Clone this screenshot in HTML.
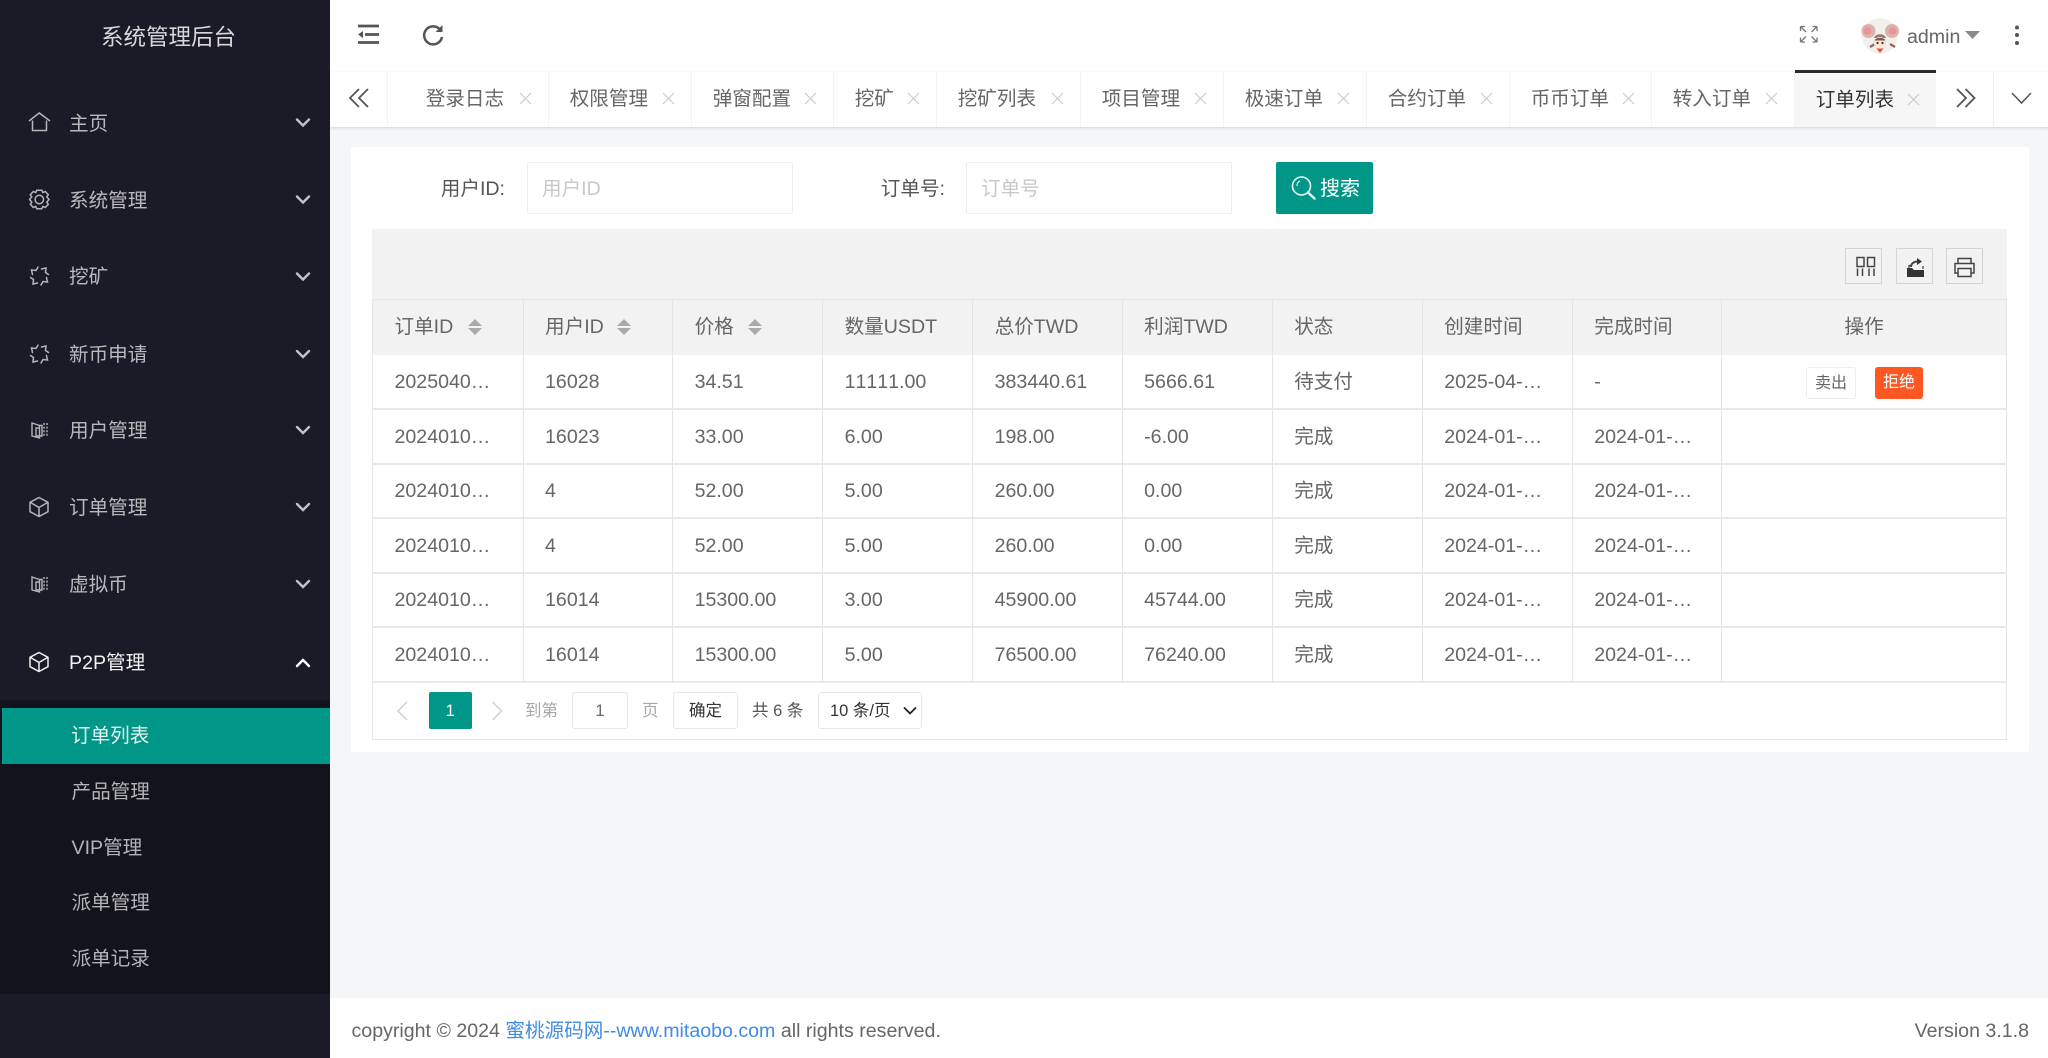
<!DOCTYPE html>
<html lang="zh-CN"><head><meta charset="utf-8"><title>订单列表</title>
<style>
*{box-sizing:border-box}
html,body{margin:0;padding:0;width:2048px;height:1058px;overflow:hidden;background:#f5f6f8}
body{position:relative;font-family:"Liberation Sans","Noto Sans CJK SC",sans-serif;font-size:19.6px;color:#666;filter:blur(.35px)}
.a{position:absolute}
.t{position:absolute;white-space:nowrap;line-height:28px;height:28px}
svg{position:absolute;overflow:visible;fill:none}
#side{left:0;top:0;width:330px;height:1058px;background:#1a1b26}
.m{color:#b9b9bd;left:69px;font-size:19.6px}
.s{color:#b4b4b8;left:71.5px;font-size:19.6px}
.tab{position:absolute;top:72px;height:55px;border-right:1px solid #f3f3f3;background:#fff;font-size:19.6px;line-height:54px;padding-left:20.7px;color:#666;white-space:nowrap}
.tab svg{top:21px;right:17px;width:11px;height:11px;stroke:#c8c8c8;stroke-width:1.1}
table{position:absolute;left:372px;top:299px;width:1635px;border-collapse:separate;border-spacing:0;table-layout:fixed;font-size:19.6px;color:#666;line-height:28px;font-kerning:none}
th{font-weight:400;text-align:left;background:#f2f2f2;padding:0 0 2px 21.5px;height:56px;border-right:1px solid #e4e4e4;border-top:1px solid #e6e6e6}
td{padding:0 0 0 21.5px;border-right:1px solid #e4e4e4;border-bottom:2px solid #e8e8e8;background:#fff;white-space:nowrap;overflow:hidden}
tr td:first-child,tr th:first-child{border-left:1px solid #e6e6e6}
tr td:nth-child(2),tr th:nth-child(2){padding-left:21px}
.sort{position:absolute;width:14px;height:16px;top:319px}
.sort:before{content:"";position:absolute;left:0;top:0;border:7px solid transparent;border-top:0;border-bottom:7px solid #a9a9a9}
.sort:after{content:"";position:absolute;left:0;top:9px;border:7px solid transparent;border-bottom:0;border-top:7px solid #a9a9a9}
.tb{position:absolute;top:248px;width:37px;height:36px;border:1px solid #d5d5d5;background:#f2f2f2}
.box{position:absolute;border:1px solid #e8e8e8;background:#fff;border-radius:3px;text-align:center}
</style></head><body>
<svg width="0" height="0" style="position:absolute"><defs>
<g id="i-burst" stroke-width="1.5" stroke-linecap="round"><path d="M-1.500-8.800L-3.500-5.500L-8-6L-7-1.500M-9 1.500L-6 3.500L-6.500 8L-2 7M1.500 9L3.500 5.500L8 6L7 1.500M9-1.500L6-3.500L6.500-8L2-7"/></g>
<g id="i-book" stroke-width="1.4"><path d="M-7.500-7L0-4.500V8L-7.500 6ZM0-4.500H2.500V6H-3.500V-2H0" /><path d="M4.500-7V7M7.500-7V7" stroke-dasharray="2 1.600"/></g>
<g id="i-cube" stroke-width="1.5" stroke-linejoin="round"><path d="M0-9.500L9-4.700V4.700L0 9.500L-9 4.700V-4.700ZM-8.500-4.500L0 0.500L8.500-4.500M0 .5V9"/></g>
<path id="i-x" d="M0 0L11 11M11 0L0 11"/>
</defs></svg>

<!-- sidebar -->
<div class="a" id="side"></div>
<div class="t" style="left:101px;top:24px;color:#d8d8da;font-size:22.5px;">系统管理后台</div>
<div class="a" style="left:0;top:700px;width:330px;height:294px;background:#12131b"></div>
<div class="a" style="left:2px;top:708px;width:328px;height:56px;background:#009688"></div>

<svg style="left:0;top:0" width="330" height="700" stroke="#b5b5b9">
<path d="M29 121L39.300 113L50 121M32.500 120.500V130.500H46.500V120.500" stroke-width="1.5"/>
<g transform="translate(39.300,199.500)" stroke-width="1.500"><circle r="4.200"/><path d="M-2.500-9.300H2.500L3.500-7L6-8L9-4.800L7.500-2.700L9.700 0L7.500 2.700L9 4.800L6 8L3.500 7L2.500 9.300H-2.500L-3.500 7L-6 8L-9 4.800L-7.500 2.700L-9.700 0L-7.500-2.700L-9-4.800L-6-8L-3.500-7Z"/></g>
<use href="#i-burst" transform="translate(39.500,276)"/>
<use href="#i-burst" transform="translate(39.500,354)"/>
<use href="#i-book" transform="translate(39.500,430)"/>
<use href="#i-cube" transform="translate(39,507)"/>
<use href="#i-book" transform="translate(39.500,584)"/>
<use href="#i-cube" transform="translate(39,662)" stroke="#f2f2f2" stroke-width="1.800"/>
<g stroke-width="2.400" stroke="#c2c2c5" stroke-linecap="round">
<path d="M297 119.500L303 125.500L309 119.500M297 196.500L303 202.500L309 196.500M297 273.500L303 279.500L309 273.500M297 351L303 357L309 351M297 427L303 433L309 427M297 504L303 510L309 504M297 581L303 587L309 581"/>
<path d="M297 666L303 660L309 666" stroke="#fff"/>
</g>
</svg>
<div class="t m" style="top:110px">主页</div>
<div class="t m" style="top:187px">系统管理</div>
<div class="t m" style="top:263px">挖矿</div>
<div class="t m" style="top:341px">新币申请</div>
<div class="t m" style="top:417px">用户管理</div>
<div class="t m" style="top:494px">订单管理</div>
<div class="t m" style="top:571px">虚拟币</div>
<div class="t m" style="top:649px;color:#f2f2f2">P2P管理</div>
<div class="t s" style="top:722px;color:#e8f4f2;left:71px">订单列表</div>
<div class="t s" style="top:778px">产品管理</div>
<div class="t s" style="top:834px">VIP管理</div>
<div class="t s" style="top:889px">派单管理</div>
<div class="t s" style="top:945px">派单记录</div>

<!-- header -->
<div class="a" style="left:330px;top:0;width:1718px;height:72px;background:#fff"></div>
<svg style="left:0;top:0" width="2048" height="72">
<path d="M358 26H379M365 34.500H379M358 42.500H379" stroke="#555" stroke-width="2.800"/>
<path d="M363 31V38L358 34.500Z" fill="#555"/>
<path d="M439.500 29A9 9 0 1 0 442 37" stroke="#555" stroke-width="2.500"/>
<path d="M442.500 25V32H435.500Z" fill="#555"/>
<g stroke="#777" stroke-width="1.300"><path d="M1800.500 26.500L1806 32M1800.500 26.500H1805M1800.500 26.500V31M1817 26.500L1811.500 32M1817 26.500H1812.500M1817 26.500V31M1800.500 42L1806 36.500M1800.500 42H1805M1800.500 42V37.500M1817 42L1811.500 36.500M1817 42H1812.500M1817 42V37.500"/></g>
<circle cx="1880" cy="36" r="18" fill="#f3efec"/>
<circle cx="1868.500" cy="31" r="7" fill="#d6b5ad"/><circle cx="1867.500" cy="31" r="3.800" fill="#ef8f96"/>
<circle cx="1892" cy="31" r="7" fill="#d6b5ad"/><circle cx="1892.500" cy="31" r="3.800" fill="#ef8f96"/>
<path d="M1870 47L1875 44M1890 44L1895 47" stroke="#8a6a5e" stroke-width="2.200"/>
<path d="M1874 38C1875 33 1885 33 1886 38Z" fill="#9a7c70"/>
<circle cx="1880" cy="43" r="6" fill="#fbe3d6"/>
<path d="M1874.500 40.500C1876 37 1884 37 1885.500 40.500Z" fill="#7a5a50"/>
<circle cx="1877.500" cy="43" r="1.100" fill="#333"/><circle cx="1882.500" cy="43" r="1.100" fill="#333"/>
<path d="M1876.500 48.500H1883.500L1880 53Z" fill="#e2543e"/>
<path d="M1965 31H1980L1972.500 39Z" fill="#8a8a8a"/>
<circle cx="2017" cy="27.500" r="2" fill="#555"/><circle cx="2017" cy="35" r="2" fill="#555"/><circle cx="2017" cy="43" r="2" fill="#555"/>
</svg>
<div class="t" style="left:1907px;top:23px;font-size:19.6px;color:#666">admin</div>

<!-- tabs -->
<div class="a" style="left:330px;top:72px;width:1718px;height:55px;background:#fff;box-shadow:0 1px 3px rgba(0,0,0,.14)"></div>
<div class="a" style="left:387px;top:72px;width:1px;height:54px;background:#f3f3f3"></div>
<div class="a" style="left:405px;top:72px;width:1px;height:54px;background:#f3f3f3"></div>
<div class="tab" style="left:405px;width:144px">登录日志<svg viewBox="0 0 11 11"><use href="#i-x"/></svg></div>
<div class="tab" style="left:549px;width:143px">权限管理<svg viewBox="0 0 11 11"><use href="#i-x"/></svg></div>
<div class="tab" style="left:692px;width:142px">弹窗配置<svg viewBox="0 0 11 11"><use href="#i-x"/></svg></div>
<div class="tab" style="left:834px;width:103px">挖矿<svg viewBox="0 0 11 11"><use href="#i-x"/></svg></div>
<div class="tab" style="left:937px;width:144px">挖矿列表<svg viewBox="0 0 11 11"><use href="#i-x"/></svg></div>
<div class="tab" style="left:1081px;width:143px">项目管理<svg viewBox="0 0 11 11"><use href="#i-x"/></svg></div>
<div class="tab" style="left:1224px;width:143px">极速订单<svg viewBox="0 0 11 11"><use href="#i-x"/></svg></div>
<div class="tab" style="left:1367px;width:143px">合约订单<svg viewBox="0 0 11 11"><use href="#i-x"/></svg></div>
<div class="tab" style="left:1510px;width:142px">币币订单<svg viewBox="0 0 11 11"><use href="#i-x"/></svg></div>
<div class="tab" style="left:1652px;width:143px">转入订单<svg viewBox="0 0 11 11"><use href="#i-x"/></svg></div>
<div class="tab" style="left:1795px;width:141px;background:#f6f6f6;color:#333;border-right:0;border-top:3px solid #2a2a2a;top:70px;height:57px">订单列表<svg viewBox="0 0 11 11"><use href="#i-x"/></svg></div>
<div class="a" style="left:1993px;top:72px;width:1px;height:54px;background:#f0f0f0"></div>
<svg style="left:0;top:0" width="2048" height="130" stroke="#555" stroke-width="1.800">
<path d="M359 89L350 98L359 107M368 89L359 98L368 107"/>
<path d="M1957 89L1966 98L1957 107M1965.500 89L1974.500 98L1965.500 107"/>
<path d="M2012 93L2021.500 103L2031 93" stroke-width="1.500"/>
</svg>

<!-- card -->
<div class="a" style="left:351px;top:147px;width:1678px;height:605px;background:#fff;border-radius:2px"></div>
<div class="t" style="right:1543px;top:175px;color:#555">用户ID:</div>
<div class="a" style="left:527px;top:162px;width:266px;height:52px;border:1px solid #eee;border-radius:2px"></div>
<div class="t" style="left:542px;top:175px;color:#c8c8c8">用户ID</div>
<div class="t" style="right:1103px;top:175px;color:#555">订单号:</div>
<div class="a" style="left:966px;top:162px;width:266px;height:52px;border:1px solid #eee;border-radius:2px"></div>
<div class="t" style="left:981px;top:175px;color:#c8c8c8">订单号</div>
<div class="a" style="left:1276px;top:162px;width:97px;height:52px;background:#009688;border-radius:2px"></div>
<svg style="left:0;top:0" width="2048" height="230" stroke="#e8f6f4"><circle cx="1301.500" cy="186" r="9" stroke-width="1.600"/><path d="M1308 192.500L1314.500 198.500" stroke-width="2.500" stroke-linecap="round"/><path d="M1297 186A5 5 0 0 1 1300 181" stroke-width="1.200"/></svg>
<div class="t" style="left:1320px;top:175px;color:#fff;font-size:20px">搜索</div>

<!-- toolbar -->
<div class="a" style="left:372px;top:229px;width:1635px;height:70px;background:#f2f2f2"></div>
<div class="tb" style="left:1845px"></div>
<div class="tb" style="left:1896px"></div>
<div class="tb" style="left:1946px"></div>
<svg style="left:0;top:0" width="2048" height="300" stroke="#444" stroke-width="1.500">
<rect x="1857" y="257.500" width="7" height="9"/><rect x="1867.500" y="257.500" width="7" height="9"/>
<path d="M1857.500 268.500V276M1862.500 268.500V276M1869 268.500V276M1874 268.500V276"/>
<path d="M1907 268H1912L1914 270H1924V277H1907Z" fill="#333" stroke="none"/>
<path d="M1909 268V265.500H1912M1923 269V266" stroke-width="1.200"/>
<path d="M1911 267C1911 263.500 1914 261.500 1918 261.500" stroke-width="2"/><path d="M1917 258L1922 261.500L1917 265Z" fill="#333" stroke="none"/>
<path d="M1958 263V258.500H1971V263M1958 273H1955V263.500H1974V273H1971M1958 268.500H1971V276.500H1958Z"/>
</svg>

<!-- table -->
<table>
<colgroup><col style="width:152px"><col style="width:149px"><col style="width:150px"><col style="width:150px"><col style="width:149.500px"><col style="width:150px"><col style="width:150px"><col style="width:150px"><col style="width:149.500px"><col style="width:284.500px"></colgroup>
<tr><th>订单ID</th><th>用户ID</th><th>价格</th><th>数量USDT</th><th>总价TWD</th><th>利润TWD</th><th>状态</th><th>创建时间</th><th>完成时间</th><th style="text-align:center;padding:0 0 2px 0">操作</th></tr>
<tr style="height:55px"><td>2025040…</td><td>16028</td><td>34.51</td><td>11111.00</td><td>383440.61</td><td>5666.61</td><td>待支付</td><td>2025-04-…</td><td>-</td><td></td></tr>
<tr style="height:55px"><td>2024010…</td><td>16023</td><td>33.00</td><td>6.00</td><td>198.00</td><td>-6.00</td><td>完成</td><td>2024-01-…</td><td>2024-01-…</td><td></td></tr>
<tr style="height:54px"><td>2024010…</td><td>4</td><td>52.00</td><td>5.00</td><td>260.00</td><td>0.00</td><td>完成</td><td>2024-01-…</td><td>2024-01-…</td><td></td></tr>
<tr style="height:55px"><td>2024010…</td><td>4</td><td>52.00</td><td>5.00</td><td>260.00</td><td>0.00</td><td>完成</td><td>2024-01-…</td><td>2024-01-…</td><td></td></tr>
<tr style="height:54px"><td>2024010…</td><td>16014</td><td>15300.00</td><td>3.00</td><td>45900.00</td><td>45744.00</td><td>完成</td><td>2024-01-…</td><td>2024-01-…</td><td></td></tr>
<tr style="height:55px"><td>2024010…</td><td>16014</td><td>15300.00</td><td>5.00</td><td>76500.00</td><td>76240.00</td><td>完成</td><td>2024-01-…</td><td>2024-01-…</td><td></td></tr>
</table>
<span class="sort" style="left:468px"></span>
<span class="sort" style="left:617px"></span>
<span class="sort" style="left:748px"></span>
<div class="box" style="left:1806px;top:367px;width:50px;height:32px;line-height:31px;font-size:16px;color:#666;border-color:#eee">卖出</div>
<div class="a" style="left:1875px;top:367px;width:48px;height:32px;line-height:32px;font-size:16px;color:#fff;background:#ff5722;border-radius:3px;text-align:center">拒绝</div>

<!-- pager -->
<div class="a" style="left:372px;top:683px;width:1635px;height:57px;border:1px solid #e8e8e8;border-top:0;background:#fff"></div>
<svg style="left:0;top:0" width="600" height="740" stroke="#d0d0d0" stroke-width="1.500"><path d="M407 702L398 711L407 720M492.500 702L501.500 711L492.500 720"/></svg>
<div class="a" style="left:429px;top:692px;width:42.500px;height:37px;background:#009688;border-radius:2px;color:#fff;text-align:center;line-height:39px;font-size:16.500px">1</div>
<div class="t" style="left:525px;top:697px;font-size:16.500px;color:#a8a8a8">到第</div>
<div class="box" style="left:572px;top:692px;width:56px;height:37px;line-height:36px;font-size:16.500px;color:#666">1</div>
<div class="t" style="left:642px;top:697px;font-size:16.500px;color:#a8a8a8">页</div>
<div class="box" style="left:673px;top:692px;width:65px;height:37px;line-height:36px;font-size:16.500px;color:#333">确定</div>
<div class="t" style="left:752px;top:697px;font-size:16.500px;color:#555">共 6 条</div>
<div class="box" style="left:818px;top:692px;width:104px;height:37px;line-height:36px;font-size:16.500px;color:#333;text-align:left;padding-left:11px">10 条/页</div>
<svg style="left:0;top:0" width="940" height="740" stroke="#222" stroke-width="1.800"><path d="M904 707.500L910 713.500L916 707.500"/></svg>

<!-- footer -->
<div class="a" style="left:330px;top:998px;width:1718px;height:60px;background:#fff"></div>
<div class="t" style="left:351.500px;top:1017px;color:#666">copyright © 2024 <span style="color:#3f8be6">蜜桃源码网--www.mitaobo.com</span> all rights reserved.</div>
<div class="t" style="right:19px;top:1017px;color:#666">Version 3.1.8</div>
</body></html>
